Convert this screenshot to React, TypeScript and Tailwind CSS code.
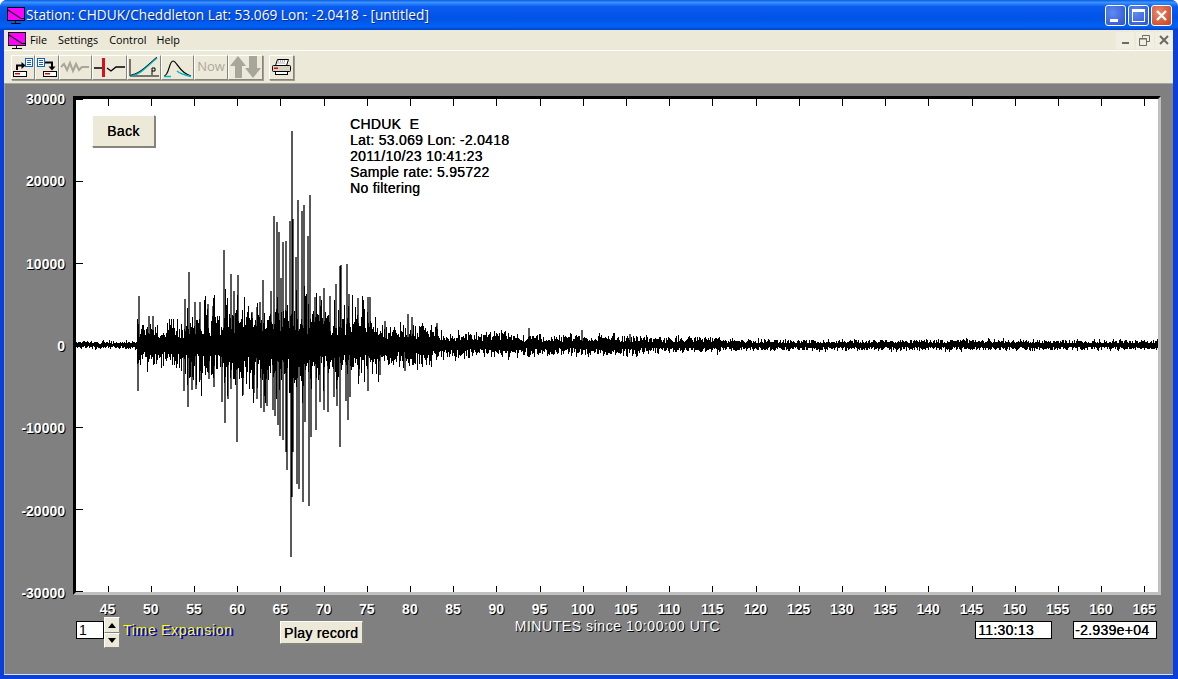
import React from 'react';

const upper = [[139,297],[149,317],[153,317],[185,300],[189,273],[195,303],[200,303],[208,305],[213,307],[224,251],[231,275],[234,292],[238,276],[252,313],[257,308],[260,303],[263,281],[271,292],[274,217],[277,223],[279,233],[281,279],[283,243],[286,242],[290,222],[292,132],[293,220],[296,258],[298,201],[302,212],[304,206],[308,237],[310,196],[315,298],[320,297],[324,289],[330,297],[336,285],[340,267],[341,266],[347,265],[349,295],[358,299],[363,310],[368,298],[370,298],[385,322],[408,315],[412,318],[437,324],[529,329],[582,331],[630,335]];
const lower = [[138,392],[184,392],[188,408],[192,391],[196,390],[201,381],[209,380],[214,388],[222,403],[225,424],[228,400],[231,390],[237,443],[243,396],[254,394],[257,400],[261,409],[264,413],[267,407],[273,411],[275,417],[278,426],[280,437],[283,441],[286,453],[287,471],[291,558],[292,498],[293,453],[297,485],[299,490],[303,503],[305,423],[309,507],[311,438],[316,431],[320,403],[324,411],[328,413],[334,398],[337,407],[340,448],[346,402],[348,421],[350,398],[359,377],[368,392],[380,376],[405,372]];

// rough envelope of the trace, in pixels either side of the zero line
const envelope = (x: number) => {
    if (x < 137) return 4;
    if (x < 184) return 22;
    if (x < 225) return 30;
    if (x < 320) return 36;
    if (x < 380) return 30;
    if (x < 440) return 20;
    if (x < 520) return 13;
    if (x < 640) return 10;
    if (x < 720) return 8;
    if (x < 1010) return 5.5;
    return 5;
};

const tracePath = () => {
    let seed = 20111023;
    const rnd = () => {
        seed = (seed * 1664525 + 1013904223) % 4294967296;
        return seed / 4294967296;
    };
    let d = '';
    for (let x = 75; x < 1158; x++) {
        const e = envelope(x);
        // the strongest part of the record has taller blocks between the spikes
        const boost = x > 184 && x < 372 ? 1.7 : 1.25;
        const a = 346 - e * (0.3 + rnd() * 0.7) * (rnd() > 0.68 ? boost : 1);
        const b = 346 + e * (0.3 + rnd() * 0.7) * (rnd() > 0.68 ? boost : 1);
        d += `M${x} ${a.toFixed(0)}V${b.toFixed(0)}`;
    }
    return d;
};

const spikePath = () => {
    let d = '';
    upper.forEach(([x, y]) => { d += `M${x} ${y}V346`; });
    lower.forEach(([x, y]) => { d += `M${x} 346V${y}`; });
    return d;
};

const xTicks = Array.from({ length: 25 }, (_, i) => 45 + i * 5);
const yLabels = ['30000', '20000', '10000', '0', '-10000', '-20000', '-30000'];
const sans = "font-['Liberation_Sans',Arial,sans-serif]";

const Logo = () => (
    <svg width="18" height="17" viewBox="0 0 18 17" shapeRendering="crispEdges">
        <rect x="0.5" y="0.5" width="17" height="13" fill="#f0f" stroke="#000" />
        <path d="M1 3l13 8.5h3" fill="none" stroke="#000" strokeWidth="1.2" shapeRendering="auto" />
        <path d="M8 14h1v2h-1zM4 16h10v1H4z" fill="#000" />
    </svg>
);

const ToolBtn = ({ w, children }: { w: string; children: React.ReactNode }) => (
    <div className={`${w} h-[25px] bg-[#ece9d8] border border-t-white border-l-white border-r-[#85847c] border-b-[#85847c] shadow-[1px_1px_0_#a09e90] flex items-center justify-center overflow-hidden`}>
        {children}
    </div>
);

const SendIcon = () => (
    <svg width="22" height="21" viewBox="0 0 22 21">
        <rect x="1.500" y="14.500" width="13" height="5" fill="#fff" stroke="#000" />
        <rect x="3" y="16" width="5" height="1.500" fill="#e00" />
        <rect x="13.500" y="1.500" width="7" height="8" fill="#fff" stroke="#1060c0" />
        <path d="M15 3.500h4M15 5.500h4M15 7.500h4" stroke="#1060c0" />
        <path d="M5 13V8.500h5" fill="none" stroke="#000" strokeWidth="2" />
        <path d="M9.500 5l4 3.500-4 3.500z" fill="#000" />
    </svg>
);

const FetchIcon = () => (
    <svg width="22" height="21" viewBox="0 0 22 21">
        <rect x="7.500" y="14.500" width="13" height="5" fill="#fff" stroke="#000" />
        <rect x="9" y="16" width="5" height="1.500" fill="#e00" />
        <rect x="1.500" y="1.500" width="7" height="8" fill="#fff" stroke="#1060c0" />
        <path d="M3 3.500h4M3 5.500h4M3 7.500h4" stroke="#1060c0" />
        <path d="M9 5.500h7V10" fill="none" stroke="#000" strokeWidth="2" />
        <path d="M12.500 9.500h7L16 13.500z" fill="#000" />
    </svg>
);

const WinBtn = ({ children, red }: { children: React.ReactNode; red?: boolean }) => (
    <div className={`w-[21px] h-[21px] rounded-[3px] border border-white flex items-center justify-center ${red ? 'bg-[radial-gradient(circle_at_35%_35%,#e8886a,#c8401e)]' : 'bg-[radial-gradient(circle_at_35%_35%,#5f8cf0,#2a50d0)]'}`}>
        {children}
    </div>
);

const MdiBtn = ({ children }: { children: React.ReactNode }) => (
    <div className="w-[18px] h-[17px] bg-[#f1efe4] flex items-center justify-center">{children}</div>
);

const SpinBtn = ({ d, h }: { d: string; h: string }) => (
    <div className={`w-[16px] ${h} bg-[#ece9d8] border border-t-white border-l-white border-r-[#85847c] border-b-[#85847c] flex items-center justify-center`}>
        <svg width="8" height="5" viewBox="0 0 8 5"><path d={d} fill="#000" /></svg>
    </div>
);

const App = () => (
    <div className={`w-[1178px] h-[679px] bg-white overflow-hidden ${sans}`}>
        <div className="h-full rounded-t-[7px] bg-[#0a3fdc] flex flex-col overflow-hidden">
            {/* Title bar */}
            <div className="h-[30px] shrink-0 bg-[linear-gradient(180deg,#0a5ae0_0%,#3a93ff_8%,#0a5cf0_22%,#0053e6_60%,#0062f4_88%,#0043c8_100%)] flex items-center pl-[7px] pr-[6px]">
                <Logo />
                <span className="ml-[1px] text-white text-[13.7px] font-['Open_Sans',sans-serif] [text-shadow:1px_1px_0_#0a2a90]">
                    Station: CHDUK/Cheddleton Lat: 53.069 Lon: -2.0418 - [untitled]
                </span>
                <div className="ml-auto flex gap-[2px]">
                    <WinBtn><div className="w-[8px] h-[3px] bg-white mt-[10px] mr-[4px]" /></WinBtn>
                    <WinBtn><div className="w-[13px] h-[13px] border border-white border-t-[3px]" /></WinBtn>
                    <WinBtn red>
                        <svg width="13" height="13" viewBox="0 0 13 13"><path d="M2 2l9 9M11 2l-9 9" stroke="#fff" strokeWidth="2.4" /></svg>
                    </WinBtn>
                </div>
            </div>

            <div className="flex-1 min-h-0 ml-[4px] mr-[5px] mb-[4px] flex flex-col bg-[#ece9d8] border-b border-[#d8e4f8]">
                {/* Menu bar */}
                <div className="h-[21px] shrink-0 flex items-center pl-[4px] border-b border-white text-[10.8px] text-black font-['Open_Sans',sans-serif]">
                    <Logo />
                    <span className="ml-[4px]">File</span>
                    <span className="ml-[11px]">Settings</span>
                    <span className="ml-[11px]">Control</span>
                    <span className="ml-[10px]">Help</span>
                    <div className="ml-auto flex gap-[1.500px]">
                        <MdiBtn><div className="w-[7px] h-[2px] bg-[#6b6b63] mt-[6px]" /></MdiBtn>
                        <MdiBtn>
                            <svg width="11" height="11" viewBox="0 0 11 11" fill="none" stroke="#6b6b63"><path d="M3.500 2.500V.5h7v6H8M.5 3.500h7v7h-7zM.5 4h7" /></svg>
                        </MdiBtn>
                        <MdiBtn>
                            <svg width="10" height="10" viewBox="0 0 10 10"><path d="M1 1l8 8M9 1l-8 8" stroke="#6b6b63" strokeWidth="2" /></svg>
                        </MdiBtn>
                    </div>
                </div>

                {/* Toolbar */}
                <div className="h-[33px] shrink-0 flex items-center pl-[7px] border-b border-[#a7a699]">
                    <ToolBtn w="w-[24px]"><SendIcon /></ToolBtn>
                    <ToolBtn w="w-[24px]"><FetchIcon /></ToolBtn>
                    <ToolBtn w="w-[33px]">
                        <svg width="31" height="16" viewBox="0 0 31 16"><path d="M1 8l3-3 3 6 3-7 3 8 3-7 3 6 3-3h7" fill="none" stroke="#a8a698" strokeWidth="2" /></svg>
                    </ToolBtn>
                    <ToolBtn w="w-[35px]">
                        <svg width="33" height="21" viewBox="0 0 33 21"><path d="M1 11h9M14 11l4 3 5-4h9" fill="none" stroke="#000" strokeWidth="1.3" /><rect x="9" y="1" width="3" height="19" fill="#d8101c" /></svg>
                    </ToolBtn>
                    <ToolBtn w="w-[34px]">
                        <svg width="31" height="21" viewBox="0 0 31 21"><path d="M1 2v17h29" fill="none" stroke="#000" /><path d="M2 19C12 17 18 9 28 1" fill="none" stroke="#00b8c8" strokeWidth="1.6" /><path d="M2 18C12 16 18 8 28 0" fill="none" stroke="#000" strokeWidth="0.8" /><path d="M23 11v7M23 11h3v3h-3" fill="none" stroke="#000" /></svg>
                    </ToolBtn>
                    <ToolBtn w="w-[33px]">
                        <svg width="31" height="21" viewBox="0 0 31 21"><path d="M2 19c5 0 5-15 9-15s6 12 18 15" fill="none" stroke="#000" strokeWidth="1.2" /><path d="M15 14c3 3 7 4 14 5.500" fill="none" stroke="#00b8c8" strokeWidth="1.6" /><path d="M2 19.500h7" stroke="#00b8c8" strokeWidth="1.4" /></svg>
                    </ToolBtn>
                    <ToolBtn w="w-[34px]"><span className="text-[#aca899] text-[13px] font-['Open_Sans',sans-serif]">Now</span></ToolBtn>
                    <ToolBtn w="w-[35px]">
                        <svg width="33" height="22" viewBox="0 0 33 22" fill="#a8a698"><path d="M9 0l8 10h-4v12H6V10H1zM24 22l8-10h-4V0h-8v12h-4z" /></svg>
                    </ToolBtn>
                    <div className="ml-[6px]">
                        <ToolBtn w="w-[25px]">
                            <svg width="21" height="18" viewBox="0 0 21 18"><path d="M6.500 1.500h11l-2 6h-11z" fill="#fff" stroke="#000" /><path d="M7 3h8M6.500 5h8" stroke="#666" strokeDasharray="1 1" /><rect x="1.500" y="7.500" width="18" height="6" rx="1" fill="#d8d4c4" stroke="#000" /><rect x="3" y="9.500" width="4" height="1.500" fill="#e00" /><rect x="4.500" y="13.500" width="12" height="3" fill="#fff" stroke="#000" /></svg>
                        </ToolBtn>
                    </div>
                </div>

                {/* Plot area */}
                <div className="flex-1 min-h-0 bg-[#808080] border-l border-[#a0a0a0]">
                    <div className="flex items-start pt-[12px]">
                        <div className="w-[60px] h-[508px] -mt-[4px] flex flex-col justify-between text-right text-white text-[14px] leading-[14px] font-bold [text-shadow:1px_1px_0_#000]">
                            {yLabels.map((l) => <span key={l}>{l}</span>)}
                        </div>
                        <div className="relative ml-[8px] w-[1088px] h-[499px] bg-white border-[3px] border-t-black border-l-black border-r-[#c0c0c0] border-b-[#c0c0c0]">
                            <svg className="block w-[1082px] h-[493px]" viewBox="76 100 1082 493">
                                <path d={tracePath()} stroke="#000" strokeWidth="1" fill="none" shapeRendering="crispEdges" />
                                <path d={spikePath()} stroke="#000" strokeWidth="1.3" fill="none" />
                                <path
                                    d={
                                        xTicks.map((t, i) => {
                                            const x = Math.round(107.5 + i * 43.2);
                                            return `M${x} 100v7M${x} 587v6`;
                                        }).join('') + 'M76 182h7M76 264h7M76 346h7M76 428h7M76 510h7M76 100h7M76 592h7M1158 0'
                                    }
                                    stroke="#000"
                                    fill="none"
                                    shapeRendering="crispEdges"
                                />
                            </svg>
                            <button className="absolute left-[16px] top-[16px] w-[63px] h-[32px] bg-[#ece9d8] border border-t-white border-l-white border-r-[#85847c] border-b-[#85847c] shadow-[1px_1px_0_#85847c] text-[14px] text-black tracking-[0.4px] [text-shadow:0.15px_0_0_#000]">
                                Back
                            </button>
                            <div className="absolute left-[274px] top-[17px] text-[14px] leading-[16px] text-black tracking-[0.28px] whitespace-nowrap [text-shadow:0.15px_0_0_#000]">
                                <p>CHDUK&nbsp; E</p>
                                <p>Lat: 53.069 Lon: -2.0418</p>
                                <p>2011/10/23 10:41:23</p>
                                <p>Sample rate: 5.95722</p>
                                <p>No filtering</p>
                            </div>
                        </div>
                    </div>

                    <div className="flex pl-[81px] mt-[1px] text-white text-[14px] leading-[16px] font-bold [text-shadow:1px_1px_0_#000]">
                        {xTicks.map((t) => <span key={t} className="w-[43.2px] shrink-0 text-center">{t}</span>)}
                    </div>

                    {/* Bottom controls */}
                    <div className="flex items-start pl-[71px] text-[14px]">
                        <div className="mt-[4px] w-[28px] h-[18px] bg-white border border-black text-black leading-[16px] pl-[2px]">1</div>
                        <div className="flex flex-col">
                            <SpinBtn d="M4 0l4 5H0z" h="h-[16px]" />
                            <SpinBtn d="M0 0h8L4 5z" h="h-[15px]" />
                        </div>
                        <span className="ml-[3px] mt-[5px] text-[#ffff00] leading-[16px] tracking-[0.7px] [text-shadow:1px_1px_0_#0000e0,2px_1px_0_#0000e0]">Time Expansion</span>
                        <button className="ml-[47px] mt-[4px] w-[83px] h-[23px] bg-[#ece9d8] border border-t-white border-l-white border-r-[#85847c] border-b-[#85847c] shadow-[1px_1px_0_#85847c] text-black leading-none tracking-[0.3px] [text-shadow:0.15px_0_0_#000]">
                            Play record
                        </button>
                        <span className="ml-[152px] mt-px text-white leading-[16px] tracking-[0.57px] whitespace-nowrap [text-shadow:1px_1px_0_#000]">MINUTES since 10:00:00 UTC</span>
                        <div className="ml-[255px] mt-[4px] w-[77px] h-[18px] bg-white border border-black text-black leading-[16px] pl-[2px] tracking-[0.3px] [text-shadow:0.15px_0_0_#000]">11:30:13</div>
                        <div className="ml-[21px] mt-[4px] w-[84px] h-[18px] bg-white border border-black text-black leading-[16px] pl-px tracking-[0.3px] [text-shadow:0.15px_0_0_#000]">-2.939e+04</div>
                    </div>
                </div>
            </div>
        </div>
    </div>
);

export default App;
